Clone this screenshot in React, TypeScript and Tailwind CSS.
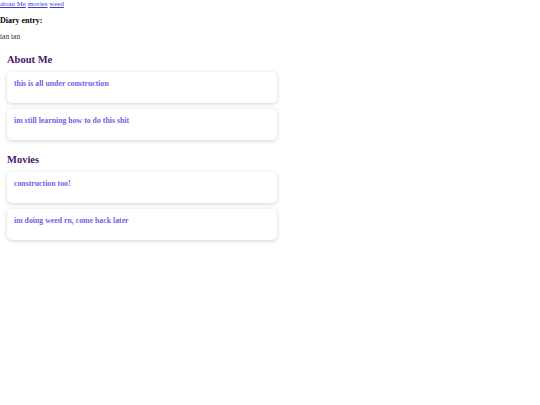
const sections = [
  {
    title: "About Me",
    entries: ["this is all under construction", "im still learning how to do this shit"],
  },
  {
    title: "Movies",
    entries: ["construction too!", "im doing weed rn, come back later"],
  },
];

function Card({ text }: { text: string }) {
  return (
    <div className="h-[31px] w-[270px] rounded-[5px] bg-white px-[7px] pt-[7px] shadow-[0_1px_4px_rgba(0,0,0,0.18)]">
      <h4 className="text-[7.8px] font-bold leading-[10px] text-[#7b5ce6]">{text}</h4>
    </div>
  );
}

export default function App() {
  return (
    <div className="min-h-[405px] w-[540px] bg-white font-['Liberation_Serif',serif] text-black">
      <nav className="flex h-[9px] gap-[2px] text-[6.8px] leading-[7px]">
        <a href="#" className="text-[#3b3bd9] underline">about Me</a>
        <a href="#" className="text-[#3b3bd9] underline">movies</a>
        <a href="#" className="text-[#3b3bd9] underline">weed</a>
      </nav>
      <h4 className="mt-[7px] text-[8px] font-bold leading-[9px]">Diary entry:</h4>
      <p className="mt-[7px] text-[7.5px] leading-[9px] text-[#333]">tan tan</p>

      <div className="px-[7px]">
        {sections.map((s, i) => (
          <section key={s.title} className={i === 0 ? "mt-[12px]" : "mt-[13px]"}>
            <h2 className="text-[10.5px] font-bold leading-[14px] text-[#4a1669]">{s.title}</h2>
            <div className="mt-[5px] flex flex-col gap-[6px]">
              {s.entries.map((e) => (
                <Card key={e} text={e} />
              ))}
            </div>
          </section>
        ))}
      </div>
    </div>
  );
}
